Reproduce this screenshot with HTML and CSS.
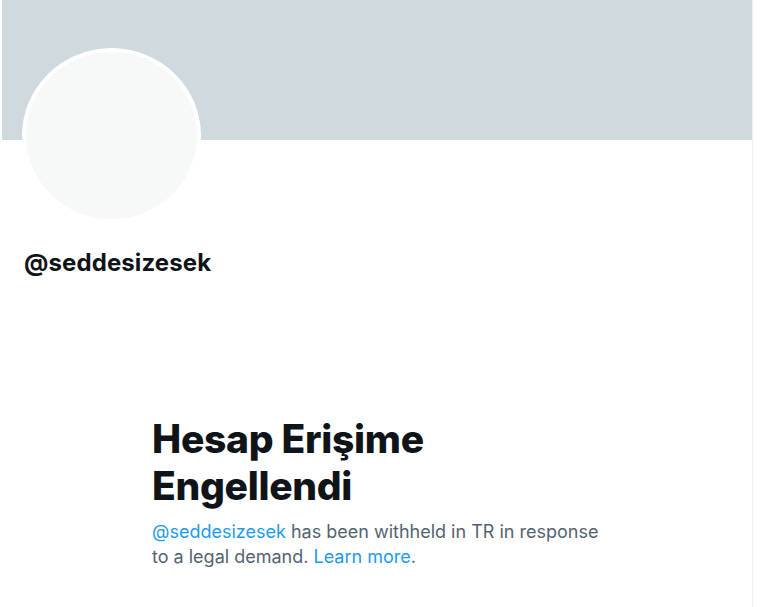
FILE: index.html
```html
<!DOCTYPE html>
<html lang="tr">
<head>
    <meta charset="UTF-8">
    <meta name="viewport" content="width=device-width, initial-scale=1.0">
    <title>@seddesizesek</title>
    <link rel="stylesheet" href="styles.css">
</head>
<body>
    <div class="column">
        <div class="banner"></div>

        <div class="profile">
            <div class="avatar"></div>
            <div class="handle">@seddesizesek</div>
        </div>

        <div class="withheld">
            <h1>Hesap Erişime Engellendi</h1>
            <p>
                <a href="#">@seddesizesek</a> has been withheld in TR in response
                to a legal demand. <a href="#">Learn more</a>.
            </p>
        </div>
    </div>
</body>
</html>
```

FILE: styles.css
```css
body {
    margin: 0;
    background-color: #ffffff;
    font-family: Inter, "Noto Sans", sans-serif;
    color: #0f1419;
}

.column {
    width: 750px;
    min-height: 607px;
    margin-left: 2px;
    border-right: 1px solid #eff3f4;
}

.banner {
    height: 140px;
    background-color: #cfd9de;
}

.profile {
    padding: 0 22px;
    margin-top: -92px;
}

.avatar {
    width: 171px;
    height: 167px;
    border: 4px solid #ffffff;
    border-radius: 50%;
    background-color: #f7f9f9;
    margin-left: -2px;
}

.handle {
    margin-top: 25px;
    font-size: 24px;
    line-height: 29px;
    font-weight: 700;
    letter-spacing: 0.1px;
}

.withheld {
    width: 450px;
    margin: 138px auto 0;
}

h1 {
    margin: 0 0 10px;
    font-size: 39px;
    line-height: 47px;
    font-weight: 800;
    letter-spacing: -0.3px;
}

p {
    margin: 0;
    font-size: 18px;
    line-height: 25px;
    color: #536471;
}

a {
    color: #1d9bf0;
    text-decoration: none;
}
```
